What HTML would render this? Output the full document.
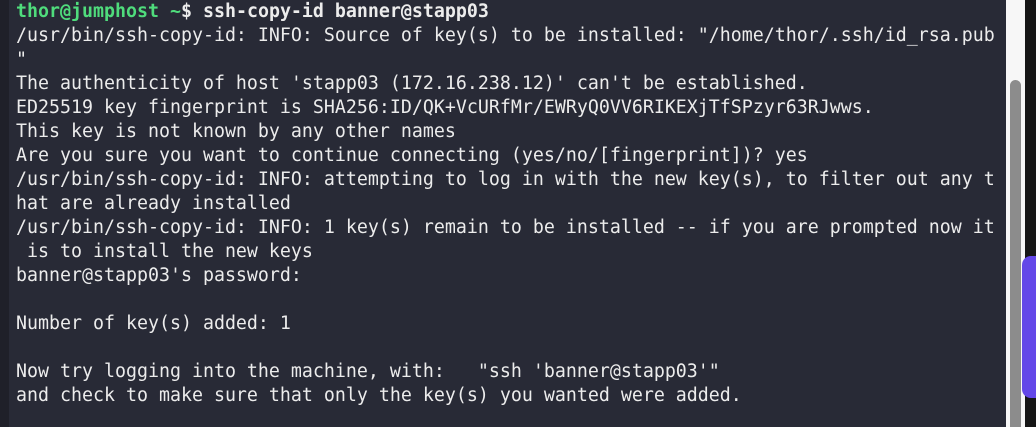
<!DOCTYPE html>
<html><head><meta charset="utf-8"><style>
html,body{margin:0;padding:0;width:1036px;height:427px;overflow:hidden;background:#272a35}
.term{position:absolute;left:0;top:0;width:1006px;height:427px;background:#282a36}
.edge{position:absolute;left:0;top:0;width:9px;height:427px;background:#1f2029}
pre{position:absolute;left:16px;top:0;margin:0;font-family:"DejaVu Sans Mono","Liberation Mono",monospace;font-size:18.27px;line-height:24px;color:#ececec;white-space:pre}
.g{color:#4fdc7c}
b{font-weight:bold;letter-spacing:-0.0px}
.sb{position:absolute;left:1006px;top:0;width:19px;height:427px;background:#f7f7f7}
.th{position:absolute;left:1010px;top:80px;width:11px;height:347px;background:#8c8c8c;border-radius:6px 6px 0 0}
.dk{position:absolute;left:1025px;top:0;width:11px;height:427px;background:#161616}
.pu{position:absolute;left:1022px;top:256px;width:14px;height:142px;background:#6347e8;border-radius:9px 0 0 9px}
</style></head><body>
<div class="term"></div><div class="edge"></div>
<pre><b><span class="g">thor@jumphost</span> <span class="g">~</span>$ ssh-copy-id banner@stapp03</b>
/usr/bin/ssh-copy-id: INFO: Source of key(s) to be installed: "/home/thor/.ssh/id_rsa.pub
"
The authenticity of host 'stapp03 (172.16.238.12)' can't be established.
ED25519 key fingerprint is SHA256:ID/QK+VcURfMr/EWRyQ0VV6RIKEXjTfSPzyr63RJwws.
This key is not known by any other names
Are you sure you want to continue connecting (yes/no/[fingerprint])? yes
/usr/bin/ssh-copy-id: INFO: attempting to log in with the new key(s), to filter out any t
hat are already installed
/usr/bin/ssh-copy-id: INFO: 1 key(s) remain to be installed -- if you are prompted now it
 is to install the new keys
banner@stapp03's password: 

Number of key(s) added: 1

Now try logging into the machine, with:   "ssh 'banner@stapp03'"
and check to make sure that only the key(s) you wanted were added.</pre>
<div class="sb"></div><div class="th"></div><div class="dk"></div><div class="pu"></div>
</body></html>
